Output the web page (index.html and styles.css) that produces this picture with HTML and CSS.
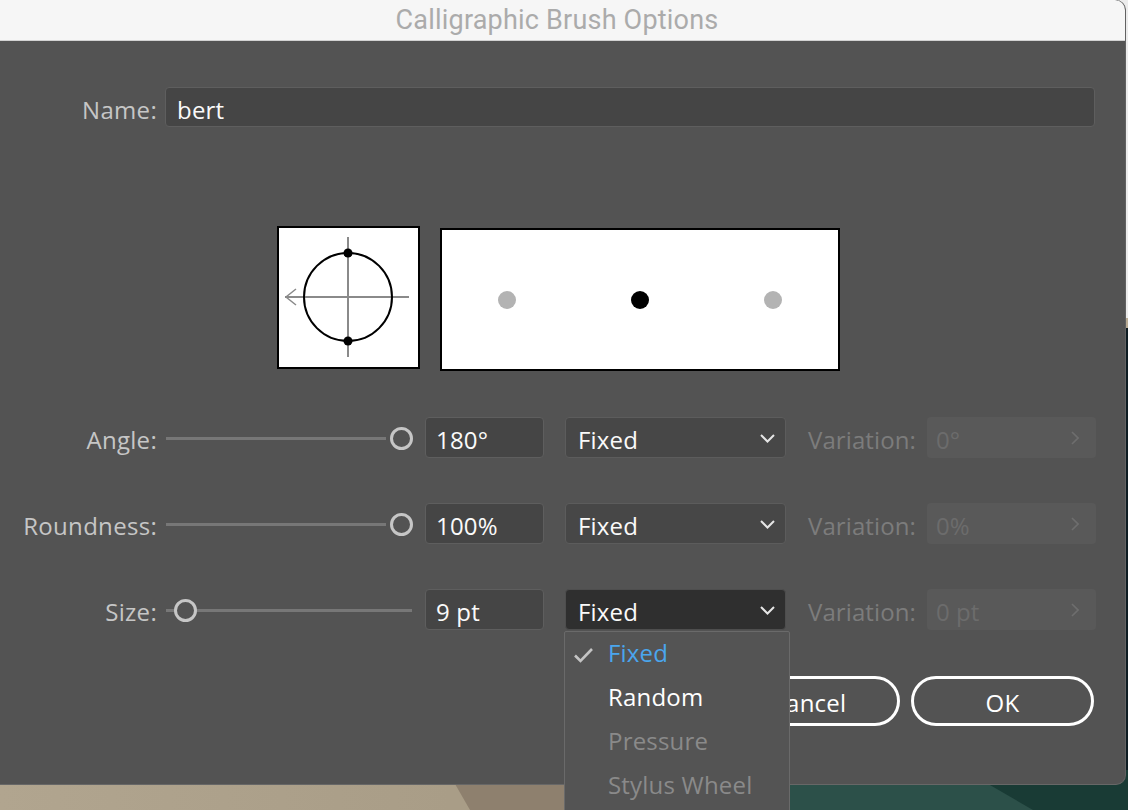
FILE: index.html
```html
<!DOCTYPE html>
<html>
<head>
<meta charset="utf-8">
<link rel="stylesheet" href="styles.css">
</head>
<body>
<div class="desktop">
  <div class="wall wall-light"></div>
  <div class="wall wall-sand-band"></div>
  <div class="wall wall-sand"></div>
  <div class="wall wall-sand-dark"></div>
  <div class="wall wall-green"></div>
  <div class="wall wall-green-dark"></div>

  <div class="dialog">
    <div class="titlebar">Calligraphic Brush Options</div>
    <div class="content">
      <div class="name-row">
        <span class="lbl">Name:</span>
        <div class="field name-field">bert</div>
      </div>

      <div class="preview">
        <div class="box angle-box">
          <svg width="139" height="139" viewBox="0 0 139 139">
            <line x1="6" y1="69" x2="130" y2="69" stroke="#8a8a8a" stroke-width="2"/>
            <line x1="69" y1="9" x2="69" y2="129" stroke="#8a8a8a" stroke-width="2"/>
            <polyline points="17,61 7,69 17,77" fill="none" stroke="#8a8a8a" stroke-width="1.5"/>
            <circle cx="69" cy="69" r="44" fill="none" stroke="#000" stroke-width="2"/>
            <circle cx="69" cy="25" r="4.5" fill="#000"/>
            <circle cx="69" cy="113" r="4.5" fill="#000"/>
          </svg>
        </div>
        <div class="box stroke-box">
          <svg width="396" height="139" viewBox="0 0 396 139">
            <circle cx="65" cy="70" r="9" fill="#b3b3b3"/>
            <circle cx="198" cy="70" r="9" fill="#000"/>
            <circle cx="331" cy="70" r="9" fill="#b3b3b3"/>
          </svg>
        </div>
      </div>

      <div class="params">
        <div class="param-row">
          <span class="lbl">Angle:</span>
          <div class="slider"><div class="track track-to-max"></div><div class="thumb thumb-max"></div></div>
          <div class="field num">180°</div>
          <div class="select"><span>Fixed</span><svg class="chev-down" width="15" height="9" viewBox="0 0 15 9"><polyline points="1,1 7.5,7.5 14,1" fill="none" stroke="#e6e6e6" stroke-width="2"/></svg></div>
          <span class="var-lbl">Variation:</span>
          <div class="var-field"><span>0°</span><svg width="8" height="14" viewBox="0 0 8 14"><polyline points="1,1 7,7 1,13" fill="none" stroke="#6e6e6e" stroke-width="1.6"/></svg></div>
        </div>
        <div class="param-row">
          <span class="lbl">Roundness:</span>
          <div class="slider"><div class="track track-to-max"></div><div class="thumb thumb-max"></div></div>
          <div class="field num">100%</div>
          <div class="select"><span>Fixed</span><svg class="chev-down" width="15" height="9" viewBox="0 0 15 9"><polyline points="1,1 7.5,7.5 14,1" fill="none" stroke="#e6e6e6" stroke-width="2"/></svg></div>
          <span class="var-lbl">Variation:</span>
          <div class="var-field"><span>0%</span><svg width="8" height="14" viewBox="0 0 8 14"><polyline points="1,1 7,7 1,13" fill="none" stroke="#6e6e6e" stroke-width="1.6"/></svg></div>
        </div>
        <div class="param-row">
          <span class="lbl">Size:</span>
          <div class="slider"><div class="track"></div><div class="thumb thumb-min"></div></div>
          <div class="field num">9 pt</div>
          <div class="select select-open"><span>Fixed</span><svg class="chev-down" width="15" height="9" viewBox="0 0 15 9"><polyline points="1,1 7.5,7.5 14,1" fill="none" stroke="#e6e6e6" stroke-width="2"/></svg>
            <div class="menu">
              <div class="item item-checked"><svg class="check" width="21" height="16" viewBox="0 0 21 16"><polyline points="2,8.5 7.5,14 19,2" fill="none" stroke="#c4c4c4" stroke-width="2.6"/></svg>Fixed</div>
              <div class="item item-on">Random</div>
              <div class="item item-off">Pressure</div>
              <div class="item item-off">Stylus Wheel</div>
            </div>
          </div>
          <span class="var-lbl">Variation:</span>
          <div class="var-field"><span>0 pt</span><svg width="8" height="14" viewBox="0 0 8 14"><polyline points="1,1 7,7 1,13" fill="none" stroke="#6e6e6e" stroke-width="1.6"/></svg></div>
        </div>
      </div>

      <div class="buttons">
        <div class="btn">Cancel</div>
        <div class="btn">OK</div>
      </div>
    </div>
  </div>
</div>
</body>
</html>
```

FILE: styles.css
```css
html, body {
  margin: 0;
  padding: 0;
}
body {
  width: 1128px;
  height: 810px;
  overflow: hidden;
  background: #0e1c22;
  font-family: "Open Sans", "Noto Sans", sans-serif;
  font-weight: 500;
}
.desktop {
  position: relative;
  width: 1128px;
  height: 810px;
}
.wall {
  position: absolute;
}
.wall-light {
  right: 0;
  top: 0;
  width: 10px;
  height: 318px;
  background: #ececec;
}
.wall-sand-band {
  right: 0;
  top: 318px;
  width: 10px;
  height: 10px;
  background: #b8ab94;
}
.wall-sand {
  left: 0;
  top: 770px;
  width: 690px;
  height: 40px;
  background: linear-gradient(90deg, #b1a58f 0px, #a99d87 450px);
}
.wall-sand-dark {
  left: 420px;
  top: 770px;
  width: 270px;
  height: 40px;
  background: #8e806e;
  clip-path: polygon(27px 0, 270px 0, 270px 40px, 50px 40px);
}
.wall-green {
  left: 690px;
  top: 770px;
  width: 438px;
  height: 40px;
  background: #2c5049;
}
.wall-green-dark {
  left: 940px;
  top: 770px;
  width: 188px;
  height: 40px;
  background: #193b35;
  clip-path: polygon(24px 0, 188px 0, 188px 40px, 93px 40px);
}

.dialog {
  position: absolute;
  left: -11px;
  top: 0;
  width: 1137px;
  height: 785px;
  box-sizing: border-box;
  background: #535353;
  border-right: 1px solid #626262;
  border-bottom: 1px solid #676767;
  border-radius: 0 10px 10px 0;
}
.titlebar {
  height: 41px;
  box-sizing: border-box;
  background: #f6f6f6;
  border-bottom: 1px solid #d2d2d2;
  border-radius: 0 10px 0 0;
  font-family: "Roboto", "Inter", sans-serif;
  font-weight: 400;
  font-size: 27px;
  line-height: 40px;
  color: #ababab;
  text-align: center;
  letter-spacing: 0.2px;
}
.content {
  padding: 46px 0 0 11px;
}
.lbl {
  width: 157px;
  flex: none;
  text-align: right;
  color: #c6c6c6;
  font-size: 24px;
  letter-spacing: 0.3px;
  padding-top: 4px;
  box-sizing: border-box;
  white-space: nowrap;
}
.name-row {
  display: flex;
  align-items: center;
  height: 40px;
}
.field {
  box-sizing: border-box;
  background: #454545;
  border: 1.5px solid #5e5e5e;
  border-radius: 4px;
  color: #fafafa;
  font-size: 24px;
  letter-spacing: 0.2px;
  display: flex;
  align-items: center;
  padding-top: 4px;
}
.name-field {
  margin-left: 8px;
  width: 930px;
  height: 40px;
  padding-left: 11px;
}

.preview {
  display: flex;
  align-items: flex-start;
  margin-top: 99px;
  padding-left: 277px;
  gap: 20px;
}
.box {
  background: #fff;
  border: 2px solid #000;
  box-sizing: border-box;
}
.box svg {
  display: block;
}
.angle-box {
  width: 143px;
  height: 143px;
}
.stroke-box {
  width: 400px;
  height: 143px;
  margin-top: 2px;
}

.params {
  margin-top: 46px;
  display: flex;
  flex-direction: column;
  gap: 45px;
}
.param-row {
  display: flex;
  align-items: center;
  height: 41px;
}
.slider {
  position: relative;
  margin-left: 9px;
  width: 246px;
  height: 22px;
  flex: none;
}
.track {
  position: absolute;
  left: 0;
  right: 0;
  top: 10px;
  height: 3px;
  background: #777;
}
.track-to-max {
  right: 26px;
}
.thumb {
  position: absolute;
  top: 0;
  width: 23px;
  height: 23px;
  box-sizing: border-box;
  border: 3.5px solid #c6c6c6;
  border-radius: 50%;
  background: #535353;
}
.thumb-max {
  left: 224px;
}
.thumb-min {
  left: 8px;
}
.num {
  margin-left: 13px;
  width: 119px;
  height: 41px;
  padding-left: 10px;
  flex: none;
}
.select {
  position: relative;
  margin-left: 21px;
  width: 221px;
  height: 41px;
  box-sizing: border-box;
  background: #474747;
  border: 1.5px solid #5c5c5c;
  border-radius: 4px;
  color: #fafafa;
  font-size: 24px;
  letter-spacing: 0.2px;
  display: flex;
  align-items: center;
  justify-content: space-between;
  padding: 0 10px 0 12px;
  flex: none;
}
.select > span {
  padding-top: 4px;
}
.select-open {
  background: #2f2f2f;
  border-color: #4e4e4e;
}
.chev-down {
  display: block;
  margin-top: 1px;
}
.var-lbl {
  margin-left: 22px;
  width: 111px;
  flex: none;
  color: #7c7c7c;
  font-size: 24px;
  letter-spacing: 0.1px;
  padding-top: 4px;
  white-space: nowrap;
}
.var-field {
  margin-left: 8px;
  width: 169px;
  height: 41px;
  box-sizing: border-box;
  background: #595959;
  border-radius: 4px;
  color: #6c6c6c;
  font-size: 24px;
  display: flex;
  align-items: center;
  justify-content: space-between;
  padding: 0 17px 0 9px;
  flex: none;
}
.var-field span {
  padding-top: 4px;
}
.var-field svg {
  display: block;
}

.buttons {
  margin-top: 46px;
  display: flex;
  justify-content: flex-end;
  gap: 11px;
  padding-right: 31px;
}
.btn {
  width: 183px;
  height: 50px;
  box-sizing: border-box;
  border: 3px solid #fff;
  border-radius: 25px;
  color: #fff;
  font-size: 24px;
  letter-spacing: 0.2px;
  display: flex;
  align-items: center;
  justify-content: center;
  padding-top: 3px;
}

.menu {
  position: absolute;
  left: -2px;
  top: 41px;
  width: 226px;
  height: 200px;
  box-sizing: border-box;
  background: #545454;
  border: 1px solid #6a6a6a;
  border-radius: 2px;
  z-index: 5;
}
.item {
  position: relative;
  height: 44px;
  line-height: 42px;
  padding-left: 43px;
  font-size: 24px;
  letter-spacing: 0.2px;
  white-space: nowrap;
}
.item-checked {
  color: #4aa6ee;
}
.item-on {
  color: #ffffff;
}
.item-off {
  color: #8a8a8a;
}
.check {
  position: absolute;
  left: 8px;
  top: 15px;
}
```
